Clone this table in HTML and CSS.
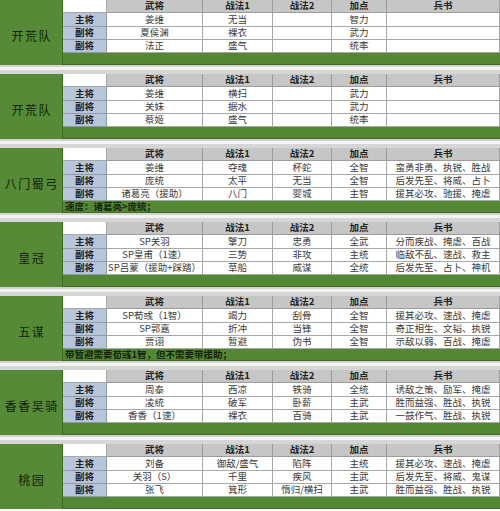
FILE: index.html
```html
<!DOCTYPE html>
<html lang="zh">
<head>
<meta charset="utf-8">
<link rel="stylesheet" href="styles.css">
</head>
<body>
<div class="page">

<section class="block">
  <div class="title">开荒队</div>
  <div class="corner"></div><div class="hd">武将</div><div class="hd">战法1</div><div class="hd">战法2</div><div class="hd">加点</div><div class="hd">兵书</div>
  <div class="role">主将</div><div class="c">姜维</div><div class="c">无当</div><div class="c"></div><div class="c">智力</div><div class="c"></div>
  <div class="role">副将</div><div class="c">夏侯渊</div><div class="c">裸衣</div><div class="c"></div><div class="c">武力</div><div class="c"></div>
  <div class="role">副将</div><div class="c">法正</div><div class="c">盛气</div><div class="c"></div><div class="c">统率</div><div class="c"></div>
  <div class="bar"></div>
</section>
<div class="sep"></div>

<section class="block">
  <div class="title">开荒队</div>
  <div class="corner"></div><div class="hd">武将</div><div class="hd">战法1</div><div class="hd">战法2</div><div class="hd">加点</div><div class="hd">兵书</div>
  <div class="role">主将</div><div class="c">姜维</div><div class="c">横扫</div><div class="c"></div><div class="c">武力</div><div class="c"></div>
  <div class="role">副将</div><div class="c">关妹</div><div class="c">据水</div><div class="c"></div><div class="c">武力</div><div class="c"></div>
  <div class="role">副将</div><div class="c">蔡姬</div><div class="c">盛气</div><div class="c"></div><div class="c">统率</div><div class="c"></div>
  <div class="bar"></div>
</section>
<div class="sep"></div>

<section class="block">
  <div class="title">八门蜀弓</div>
  <div class="corner"></div><div class="hd">武将</div><div class="hd">战法1</div><div class="hd">战法2</div><div class="hd">加点</div><div class="hd">兵书</div>
  <div class="role">主将</div><div class="c">姜维</div><div class="c">夺魂</div><div class="c">杯蛇</div><div class="c">全智</div><div class="c">蛮勇非勇、执锐、胜战</div>
  <div class="role">副将</div><div class="c">庞统</div><div class="c">太平</div><div class="c">无当</div><div class="c">全智</div><div class="c">后发先至、将威、占卜</div>
  <div class="role">副将</div><div class="c">诸葛亮（援助）</div><div class="c">八门</div><div class="c">婴城</div><div class="c">主智</div><div class="c">援其必攻、驰援、掩虐</div>
  <div class="bar">速度：诸葛亮&gt;庞统；</div>
</section>
<div class="sep"></div>

<section class="block">
  <div class="title">皇冠</div>
  <div class="corner"></div><div class="hd">武将</div><div class="hd">战法1</div><div class="hd">战法2</div><div class="hd">加点</div><div class="hd">兵书</div>
  <div class="role">主将</div><div class="c">SP关羽</div><div class="c">擎刀</div><div class="c">忠勇</div><div class="c">全武</div><div class="c">分而疾战、掩虐、百战</div>
  <div class="role">副将</div><div class="c">SP皇甫（1速）</div><div class="c">三势</div><div class="c">非攻</div><div class="c">主统</div><div class="c">临敌不乱、速战、救主</div>
  <div class="role">副将</div><div class="c">SP吕蒙（援助+踩踏）</div><div class="c">草船</div><div class="c">威谋</div><div class="c">全统</div><div class="c">后发先至、占卜、神机</div>
  <div class="bar"></div>
</section>
<div class="sep"></div>

<section class="block">
  <div class="title">五谋</div>
  <div class="corner"></div><div class="hd">武将</div><div class="hd">战法1</div><div class="hd">战法2</div><div class="hd">加点</div><div class="hd">兵书</div>
  <div class="role">主将</div><div class="c">SP荀彧（1智）</div><div class="c">竭力</div><div class="c">刮骨</div><div class="c">全智</div><div class="c">援其必攻、速战、掩虐</div>
  <div class="role">副将</div><div class="c">SP郭嘉</div><div class="c">折冲</div><div class="c">当锋</div><div class="c">全智</div><div class="c">奇正相生、文韬、执锐</div>
  <div class="role">副将</div><div class="c">贾诩</div><div class="c">暂避</div><div class="c">伪书</div><div class="c">全智</div><div class="c">示敌以弱、百战、掩虐</div>
  <div class="bar">带暂避需要荀彧1智，但不需要带援助；</div>
</section>
<div class="sep"></div>

<section class="block">
  <div class="title">香香吴骑</div>
  <div class="corner"></div><div class="hd">武将</div><div class="hd">战法1</div><div class="hd">战法2</div><div class="hd">加点</div><div class="hd">兵书</div>
  <div class="role">主将</div><div class="c">周泰</div><div class="c">西凉</div><div class="c">铁骑</div><div class="c">全统</div><div class="c">诱敌之策、励军、掩虐</div>
  <div class="role">副将</div><div class="c">凌统</div><div class="c">破军</div><div class="c">卧薪</div><div class="c">主武</div><div class="c">胜而益强、胜战、执锐</div>
  <div class="role">副将</div><div class="c">香香（1速）</div><div class="c">裸衣</div><div class="c">百骑</div><div class="c">主武</div><div class="c">一鼓作气、胜战、执锐</div>
  <div class="bar"></div>
</section>
<div class="sep"></div>

<section class="block">
  <div class="title">桃园</div>
  <div class="corner"></div><div class="hd">武将</div><div class="hd">战法1</div><div class="hd">战法2</div><div class="hd">加点</div><div class="hd">兵书</div>
  <div class="role">主将</div><div class="c">刘备</div><div class="c">御敌/盛气</div><div class="c">陷阵</div><div class="c">主统</div><div class="c">援其必攻、速战、掩虐</div>
  <div class="role">副将</div><div class="c">关羽（S）</div><div class="c">千里</div><div class="c">疾风</div><div class="c">主武</div><div class="c">后发先至、将威、鬼谋</div>
  <div class="role">副将</div><div class="c">张飞</div><div class="c">箕形</div><div class="c">惰归/横扫</div><div class="c">主武</div><div class="c">胜而益强、胜战、执锐</div>
  <div class="bar"></div>
</section>

</div>
</body>
</html>
```

FILE: styles.css
```css
* { box-sizing: border-box; }
html, body {
  margin: 0;
  padding: 0;
  background: #ffffff;
}
body {
  width: 500px;
  height: 511px;
  overflow: hidden;
  font-family: "Noto Sans CJK SC", "Liberation Sans", sans-serif;
  color: #3a3a3a;
}
.page {
  display: flex;
  flex-direction: column;
}
.block {
  display: grid;
  grid-template-columns: 63px 44px 96px 70px 59px 55px 113px;
  grid-template-rows: 13px 14px 13px 13px 12px;
  font-size: 9.5px;
  line-height: 1;
}
.title {
  grid-column: 1;
  grid-row: 1 / 6;
  background: #578a36;
  border-right: 1px solid #3f6a25;
  display: flex;
  align-items: center;
  justify-content: center;
  padding-top: 6px;
  font-size: 12px;
  letter-spacing: 1.5px;
  text-indent: 1.5px;
  white-space: nowrap;
  color: #102408;
}
.corner {
  background: #ffffff;
  border-right: 1px solid #a8a8a8;
  border-bottom: 1px solid #a8a8a8;
}
.hd {
  background: #c6c6c6;
  color: #222;
  font-weight: 700;
  display: flex;
  align-items: center;
  justify-content: center;
  border-right: 1px solid #9c9c9c;
  border-bottom: 1px solid #9c9c9c;
}
.role {
  background: #b6c5d8;
  color: #1e1e1e;
  font-weight: 700;
  display: flex;
  align-items: center;
  justify-content: center;
  border-right: 1px solid #8f9aa6;
  border-bottom: 1px solid #8f9aa6;
}
.c {
  background: #ffffff;
  display: flex;
  align-items: center;
  justify-content: center;
  white-space: nowrap;
  border-right: 1px solid #a8a8a8;
  border-bottom: 1px solid #a8a8a8;
}
.bar {
  grid-column: 2 / 8;
  grid-row: 5;
  background: #548733;
  border-bottom: 1px solid #3f6a25;
  color: #14240c;
  font-weight: 700;
  font-size: 9.5px;
  display: flex;
  align-items: center;
  padding-left: 2px;
}
.sep {
  height: 9px;
  background: linear-gradient(#d2d2d2 0 2px, #f3f3f3 2px 5px, #d6d6d6 5px 9px);
}
```
